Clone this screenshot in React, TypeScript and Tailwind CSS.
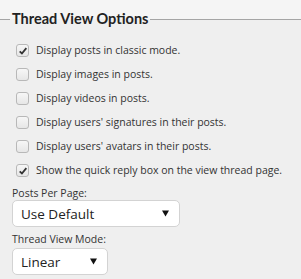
const options = [
  { label: "Display posts in classic mode.", checked: true },
  { label: "Display images in posts.", checked: false },
  { label: "Display videos in posts.", checked: false },
  { label: "Display users' signatures in their posts.", checked: false },
  { label: "Display users' avatars in their posts.", checked: false },
  { label: "Show the quick reply box on the view thread page.", checked: true },
];

function Box({ checked }: { checked: boolean }) {
  return (
    <span className="flex h-[13px] w-[13px] shrink-0 items-center justify-center rounded-[3px] border border-[#b8b8b8] bg-[linear-gradient(#f7f7f7,#e6e6e6)]">
      {checked && (
        <svg viewBox="0 0 12 12" className="h-[10px] w-[10px]">
          <path d="M2 6.5 L4.7 9 L10 2.5" fill="none" stroke="#333" strokeWidth="2.2" />
        </svg>
      )}
    </span>
  );
}

function Select({ value, width }: { value: string; width: string }) {
  return (
    <div
      className={`flex h-[27px] ${width} items-center justify-between rounded-[5px] border border-[#d3d3d3] bg-white pl-[8px] pr-[10px] text-[13.5px] text-[#222]`}
    >
      <span>{value}</span>
      <svg viewBox="0 0 8 7" className="h-[7px] w-[7px]">
        <path d="M0 0 H8 L4 7 Z" fill="#111" />
      </svg>
    </div>
  );
}

export default function App() {
  return (
    <div className="h-[279px] w-[301px] bg-[linear-gradient(#f5f5f5_19px,#efefef_19px)] font-['Open_Sans',sans-serif] text-[#333]">
      <div className="flex h-[22px] items-center pt-[8px] box-content">
        <div className="h-px w-[10px] bg-[#a5a5a5]" />
        <h2 className="px-[2px] font-['Lato',sans-serif] text-[14.5px] leading-[20px] font-bold text-[#222]">
          Thread View Options
        </h2>
        <div className="h-px flex-1 bg-[#a5a5a5]" />
      </div>
      <div className="mt-[14px] flex flex-col gap-[11px] pl-[16px] text-[10.5px] leading-[13px]">
        {options.map((o) => (
          <div key={o.label} className="flex items-center gap-[7px]">
            <Box checked={o.checked} />
            <span>{o.label}</span>
          </div>
        ))}
      </div>
      <div className="mt-[9px] px-[12px] text-[10.5px] leading-[14px]">
        <div>Posts Per Page:</div>
        <div>
          <Select value="Use Default" width="w-[168px]" />
        </div>
        <div className="mt-[5px]">Thread View Mode:</div>
        <div className="mt-[2px]">
          <Select value="Linear" width="w-[96px]" />
        </div>
      </div>
    </div>
  );
}
